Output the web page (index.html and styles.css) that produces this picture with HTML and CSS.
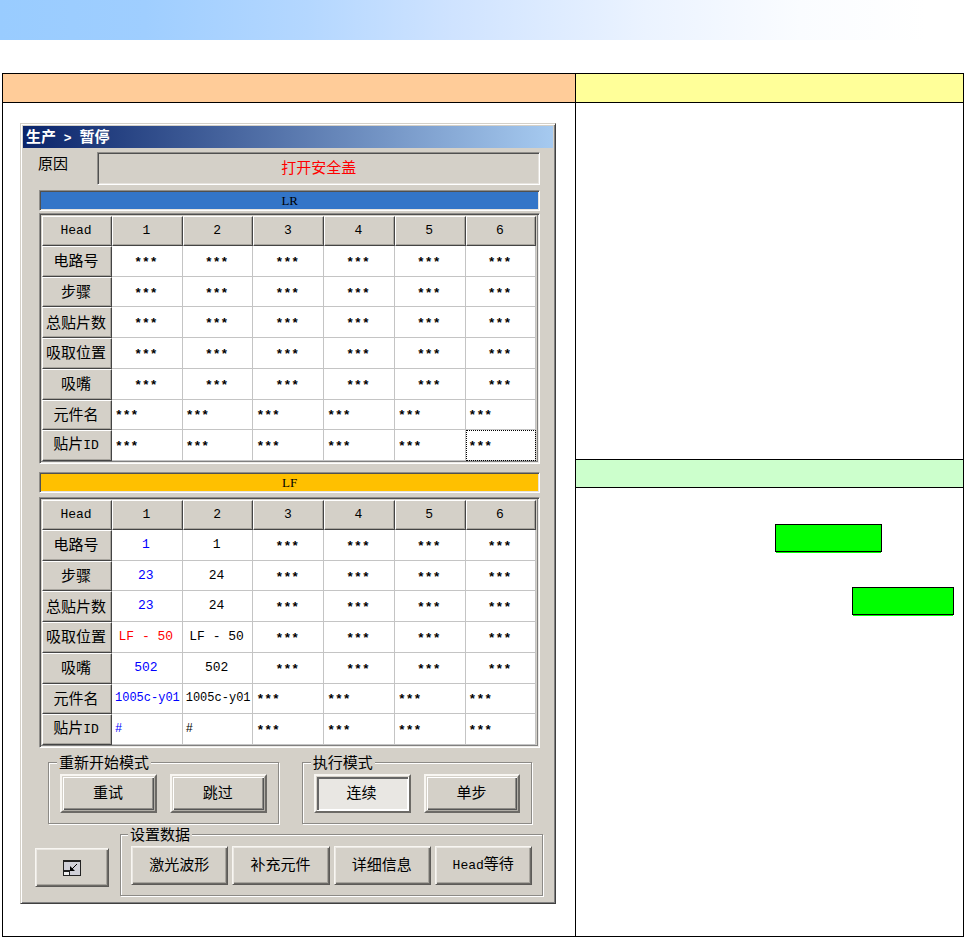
FILE: index.html
```html
<!DOCTYPE html>
<html lang="zh-CN">
<head>
<meta charset="utf-8">
<meta name="viewport" content="width=device-width, initial-scale=1">
<title>生产 &gt; 暂停</title>
<link rel="stylesheet" href="styles.css">
</head>
<body>
<header class="banner"></header>
<main class="sheet">
  <section class="col">
    <div class="head head-orange"></div>
    <div class="screen">
      <div class="window">
        <h1 class="title">生产<span class="latin"> &gt; </span>暂停</h1>
        <div class="content">
          <div class="reason">
            <span class="reason-label">原因</span>
            <output class="reason-box">打开安全盖</output>
          </div>

          <h2 class="bar bar-lr">LR</h2>
          <div class="grid-box">
            <table class="grid">
              <thead>
                <tr><th class="key">Head</th><th>1</th><th>2</th><th>3</th><th>4</th><th>5</th><th>6</th></tr>
              </thead>
              <tbody>
                <tr class="none"><th>电路号</th><td>***</td><td>***</td><td>***</td><td>***</td><td>***</td><td>***</td></tr>
                <tr class="none"><th>步骤</th><td>***</td><td>***</td><td>***</td><td>***</td><td>***</td><td>***</td></tr>
                <tr class="none"><th>总贴片数</th><td>***</td><td>***</td><td>***</td><td>***</td><td>***</td><td>***</td></tr>
                <tr class="none"><th>吸取位置</th><td>***</td><td>***</td><td>***</td><td>***</td><td>***</td><td>***</td></tr>
                <tr class="none"><th>吸嘴</th><td>***</td><td>***</td><td>***</td><td>***</td><td>***</td><td>***</td></tr>
                <tr class="none left"><th>元件名</th><td>***</td><td>***</td><td>***</td><td>***</td><td>***</td><td>***</td></tr>
                <tr class="none left"><th>贴片<span class="latin">ID</span></th><td>***</td><td>***</td><td>***</td><td>***</td><td>***</td><td class="focus">***</td></tr>
              </tbody>
            </table>
          </div>

          <h2 class="bar bar-lf">LF</h2>
          <div class="grid-box">
            <table class="grid">
              <thead>
                <tr><th class="key">Head</th><th>1</th><th>2</th><th>3</th><th>4</th><th>5</th><th>6</th></tr>
              </thead>
              <tbody>
                <tr class="none"><th>电路号</th><td class="val blue">1</td><td class="val">1</td><td>***</td><td>***</td><td>***</td><td>***</td></tr>
                <tr class="none"><th>步骤</th><td class="val blue">23</td><td class="val">24</td><td>***</td><td>***</td><td>***</td><td>***</td></tr>
                <tr class="none"><th>总贴片数</th><td class="val blue">23</td><td class="val">24</td><td>***</td><td>***</td><td>***</td><td>***</td></tr>
                <tr class="none"><th>吸取位置</th><td class="val red">LF - 50</td><td class="val">LF - 50</td><td>***</td><td>***</td><td>***</td><td>***</td></tr>
                <tr class="none"><th>吸嘴</th><td class="val blue">502</td><td class="val">502</td><td>***</td><td>***</td><td>***</td><td>***</td></tr>
                <tr class="none left"><th>元件名</th><td class="val blue">1005c-y01</td><td class="val">1005c-y01</td><td>***</td><td>***</td><td>***</td><td>***</td></tr>
                <tr class="none left"><th>贴片<span class="latin">ID</span></th><td class="val blue">#</td><td class="val">#</td><td>***</td><td>***</td><td>***</td><td>***</td></tr>
              </tbody>
            </table>
          </div>

          <div class="modes">
            <fieldset class="group">
              <legend>重新开始模式</legend>
              <div class="buttons wide">
                <button type="button" class="mode">重试</button>
                <button type="button" class="mode">跳过</button>
              </div>
            </fieldset>
            <fieldset class="group">
              <legend>执行模式</legend>
              <div class="buttons wide">
                <button type="button" class="mode on" aria-pressed="true">连续</button>
                <button type="button" class="mode" aria-pressed="false">单步</button>
              </div>
            </fieldset>
          </div>

          <div class="tools">
            <button type="button" class="push shrink" aria-label="缩小">
              <svg width="18" height="16" viewBox="0 0 18 16" aria-hidden="true">
                <rect x="0" y="0" width="18" height="16" fill="#222"/>
                <rect x="1" y="2" width="16" height="13" fill="#d0d0d8"/>
                <rect x="0" y="10" width="7" height="6" fill="#222"/>
                <rect x="1" y="12" width="5" height="3" fill="#f0f0f0"/>
                <path d="M14 4L8 10" fill="none" stroke="#000"/>
                <path d="M7 6v5h5z" fill="#000"/>
              </svg>
            </button>
            <fieldset class="group">
              <legend>设置数据</legend>
              <div class="buttons">
                <button type="button" class="push">激光波形</button>
                <button type="button" class="push">补充元件</button>
                <button type="button" class="push">详细信息</button>
                <button type="button" class="push"><span class="latin">Head</span>等待</button>
              </div>
            </fieldset>
          </div>
        </div>
      </div>
    </div>
  </section>
  <section class="col notes">
    <div class="head head-yellow"></div>
    <div class="note-top"></div>
    <div class="head head-green"></div>
    <div class="note-bottom">
      <div class="mark mark-a"></div>
      <div class="mark mark-b"></div>
    </div>
  </section>
</main>
</body>
</html>
```
FILE: styles.css
```css
:root {
  --face: #d4d0c8;
  --dark: #444;
  --light: #f8f6f2;
}

* {
  box-sizing: border-box;
}

body {
  margin: 0;
  background: #fff;
  color: #000;
  font: 15px/20px "Noto Sans CJK SC", sans-serif;
}

.banner {
  height: 40px;
  background: linear-gradient(90deg, #99ccff 0%, #9fceff 15%, #b4d7ff 32%, #cfe3ff 47%, #ebf3ff 67%, #fafcff 83%, #fff 96%);
}

/* Outer ruled sheet */
.sheet {
  display: grid;
  grid-template-columns: 573fr 388fr;
  margin: 33px 0 0 2px;
  border: 1px solid #000;
}

.col {
  display: flex;
  flex-direction: column;
  min-width: 0;
}

.notes {
  border-left: 1px solid #000;
}

.head {
  flex: none;
  height: 29px;
  border-bottom: 1px solid #000;
}

.head-orange {
  background: #ffcc99;
}

.head-yellow {
  background: #ffff99;
}

.head-green {
  background: #ccffcc;
  border-top: 1px solid #000;
}

.note-top {
  min-height: 356px;
}

.note-bottom {
  display: flex;
  flex: 1;
  flex-direction: column;
  align-items: flex-end;
  gap: 35px;
  padding-top: 36px;
}

.mark {
  height: 28px;
  border: 1px solid #000;
  background: #00ff00;
  box-shadow: 0 2px 0 -1px #00ff00;
}

.mark-a {
  width: 107px;
  margin-right: 81px;
}

.mark-b {
  width: 102px;
  margin-right: 9px;
}

/* Dialog window */
.screen {
  padding: 20px 19px 32px 17px;
}

.window {
  padding: 2px;
  border: 1px solid;
  border-color: var(--face) #404040 #404040 var(--face);
  background: var(--face);
  box-shadow: inset 1px 1px #fff, inset -1px -1px #808080;
}

.title {
  height: 22px;
  margin: 0;
  padding: 0 3px;
  background: linear-gradient(90deg, #0a246a, #a6caf0);
  color: #fff;
  font-size: 15px;
  line-height: 20px;
  font-weight: 700;
}

.content {
  padding: 4px 10px 5px 12px;
}

.reason {
  display: flex;
  margin: 0 3px 5px;
}

.reason-label {
  flex: 0 0 59px;
  line-height: 22px;
}

.reason-box {
  flex: 1;
  color: #f00;
  line-height: 28px;
  padding-bottom: 3px;
  text-align: center;
}

.reason-box,
.bar {
  border: 1px solid;
  border-color: #908e8a #fff #fff #908e8a;
  box-shadow: inset 1px 1px #505050, inset -1px -1px #e6e3de;
}

.bar {
  height: 21px;
  margin: 0 3px 2px 4px;
  font: 13px/20px "Liberation Serif", serif;
  text-align: center;
}

.bar-lr {
  background: #3375c8;
}

.bar-lf {
  margin: 8px 3px 4px 4px;
  background: #ffc000;
}

.grid-box {
  margin: 0 3px 0 4px;
  padding: 2px 3px 2px 2px;
  border: 1px solid;
  border-color: #908e8a #fff #fff #908e8a;
  box-shadow: inset 1px 1px #505050, inset -1px -1px #eceae6, inset -2px -2px #808080;
}

.grid {
  width: 100%;
  height: 245px;
  table-layout: fixed;
  border-collapse: separate;
  border-spacing: 0;
}

.grid .key {
  width: 70px;
}

.grid th,
.grid td {
  height: 30px;
  overflow: hidden;
  padding: 0;
  line-height: 20px;
  text-align: center;
  white-space: nowrap;
}

.grid th {
  padding: 0 2px 2px 0;
  border: 1px solid;
  border-color: #fff var(--dark) var(--dark) #fff;
  background: var(--face);
  box-shadow: inset -1px -1px #a8a59e;
  font-weight: 400;
}

.grid thead th,
.grid td,
.latin {
  font-family: "Liberation Mono", monospace;
  font-size: 13px;
}

.title .latin {
  white-space: pre;
}

.grid thead th {
  padding-bottom: 0;
}

.grid td {
  border: solid #c4c4c4;
  border-width: 0 1px 1px 0;
  background: #fff;
}

.grid .none td {
  padding-top: 4px;
  padding-right: 2px;
  font-weight: 700;
}

.grid .none .val {
  padding-top: 0;
  font-weight: 400;
}

.grid .left td {
  padding-right: 0;
  padding-left: 3px;
  text-align: left;
}

.grid .left .val {
  font-size: 12px;
}

.grid .focus {
  outline: 1px dotted #000;
  outline-offset: -1px;
}

.grid .blue {
  color: #00f;
}

.grid .red {
  color: #f00;
}

/* Grouped buttons */
.modes {
  display: grid;
  grid-template-columns: 1fr 1fr;
  gap: 23px;
  margin: 5px 11px 0 13px;
}

.group {
  min-width: 0;
  margin: 0;
  padding: 3px 11px 10px;
  border: 1px solid #8c8a86;
  box-shadow: inset 1px 1px #fff, 1px 1px #fff;
}

.group legend {
  padding: 0 2px;
  margin-left: -3px;
  background: var(--face);
  line-height: 18px;
}

.buttons {
  display: flex;
  gap: 4px;
}

.wide {
  gap: 13px;
}

button {
  flex: 1;
  min-width: 0;
  height: 39px;
  padding: 0 1px 3px 0;
  border: 1px solid;
  border-color: var(--light) #5c5a57 #5c5a57 var(--light);
  border-radius: 0;
  background: var(--face);
  color: #000;
  font: inherit;
  white-space: nowrap;
}

.push {
  box-shadow: inset 1px 1px #ebe8e3, inset -1px -1px #6c6a66, inset -2px -2px #a8a59e;
}

.mode {
  border-width: 2px;
  border-color: var(--light) #6c6a66 #6c6a66 var(--light);
  box-shadow: inset 1px 1px var(--face), inset -1px -1px #b0ada6, inset 2px 2px #fff, inset -2px -2px #555, inset -3px -3px #8e8c87;
}

.on {
  background: #e9e7e3;
  box-shadow: inset 1px 1px var(--face), inset -1px -1px #fff, inset 3px 3px #666, inset -2px -2px #fff;
}

.tools {
  display: flex;
  align-items: flex-end;
  gap: 11px;
  margin-top: 1px;
}

.tools .group {
  flex: 1;
  padding-right: 10px;
  padding-left: 10px;
}

.shrink {
  flex: 0 0 74px;
  margin-bottom: 9px;
  padding-bottom: 0;
}

.shrink svg {
  display: block;
  margin: auto;
}
```
